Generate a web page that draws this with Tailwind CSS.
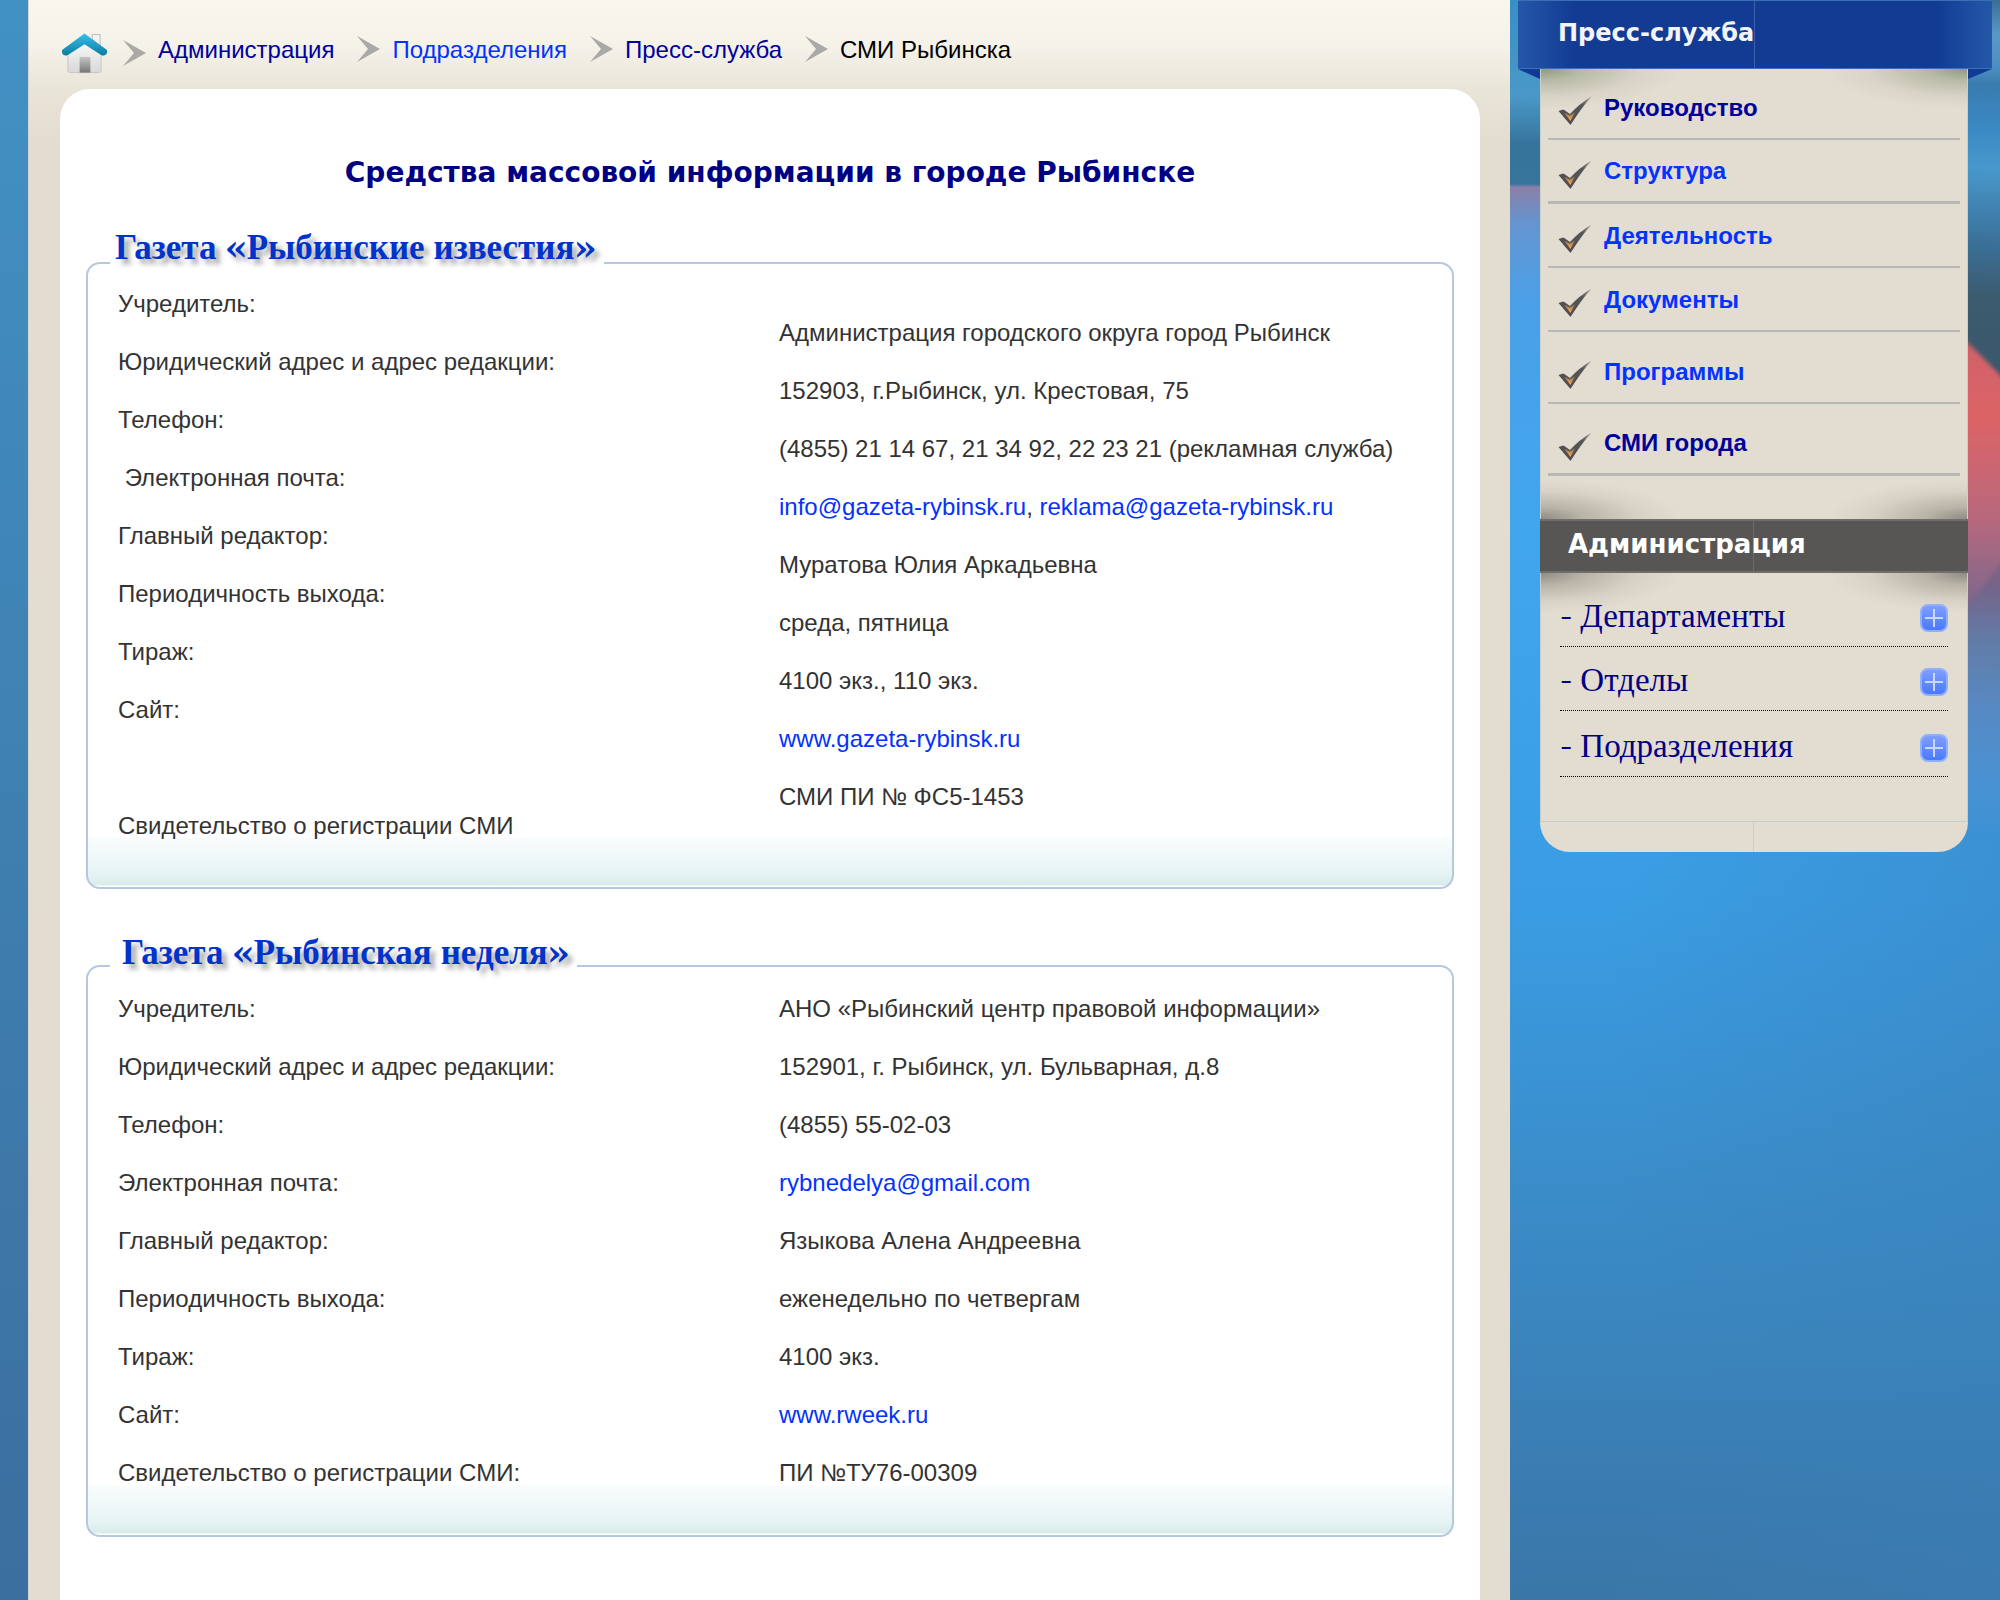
<!DOCTYPE html>
<html lang="ru">
<head>
<meta charset="utf-8">
<title>СМИ Рыбинска</title>
<meta name="viewport" content="width=device-width, initial-scale=1">
<script src="https://cdn.jsdelivr.net/npm/@tailwindcss/browser@4"></script>
</head>
<body class="min-h-screen flex bg-linear-to-b from-[#4291c4] to-[#3b6f9f] font-['Liberation_Sans',Arial,sans-serif] text-2xl leading-[29px] text-[#333]">

<svg class="absolute size-0" aria-hidden="true">
  <defs>
    <linearGradient id="roof" x1="0" y1="0" x2="0" y2="1"><stop offset="0" stop-color="#35c0ec"/><stop offset="1" stop-color="#0d7c9f"/></linearGradient>
    <linearGradient id="wall" x1="0" y1="0" x2="0" y2="1"><stop offset="0" stop-color="#fafafa"/><stop offset="1" stop-color="#d8d8d8"/></linearGradient>
    <linearGradient id="door" x1="0" y1="0" x2="0" y2="1"><stop offset="0" stop-color="#c4c4c4"/><stop offset="1" stop-color="#777"/></linearGradient>
    <linearGradient id="tick" x1="0" y1="0" x2="0" y2="1"><stop offset="0" stop-color="#a86a3c"/><stop offset="1" stop-color="#f0b060"/></linearGradient>
    <linearGradient id="steel" x1="0" y1="1" x2="1" y2="0"><stop offset="0" stop-color="#4a4b50"/><stop offset=".7" stop-color="#55565a"/><stop offset="1" stop-color="#a5a29c"/></linearGradient>
  </defs>
  <symbol id="arrow" viewBox="0 0 24 26"><path d="M1 0 L24 13 L1 26 L12 13 Z" fill="#a9a9a5"/></symbol>
  <symbol id="check" viewBox="0 0 34 30">
    <path d="M0.5 15 L5.500 13.500 L12 18 Q21 8 33.500 0.500 Q24 11 12.500 29 Z" fill="url(#steel)"/>
    <path d="M6 16.500 L12 19.500 L17 16 L12.500 25 Z" fill="url(#tick)"/>
  </symbol>
</svg>

<main class="flex-1 ml-7 pl-[31px] pr-[30px] flex flex-col border-l border-[#d8d6cc] bg-[#e3dcd0] bg-linear-[180deg,#f9f6ee_0px,#f5f2ea_45px,#e9e5d8_88px,#e3dcd0_145px]">
  <nav aria-label="Навигация" class="h-[89px] flex items-center pt-[9px] pl-0.5 text-[#00009c]">
    <a href="#" aria-label="Главная" class="mt-2">
      <svg class="block w-[45px] h-[41px]" viewBox="0 0 46 41">
        <path d="M31 1 h8 v14 l-8 -6z" fill="#f2f2f2" stroke="#bbb"/>
        <path d="M6 20 L23 8 L40 20 V38 Q40 40 38 40 H8 Q6 40 6 38 Z" fill="url(#wall)" stroke="#c6c6c6"/>
        <rect x="18" y="24" width="11" height="16" fill="url(#door)"/>
        <path d="M0 17 L23 0 L46 17 V20 Q44 24 40 22 L23 11 L6 22 Q2 24 0 20 Z" fill="url(#roof)"/>
      </svg>
    </a>
    <svg class="w-6 h-[26px] ml-[15px] mt-2"><use href="#arrow"/></svg>
    <a href="#" class="ml-3">Администрация</a>
    <svg class="w-6 h-[26px] ml-[22px]"><use href="#arrow"/></svg>
    <a href="#" class="ml-3 text-[#0432ff]">Подразделения</a>
    <svg class="w-6 h-[26px] ml-[22px]"><use href="#arrow"/></svg>
    <a href="#" class="ml-3">Пресс-служба</a>
    <svg class="w-6 h-[26px] ml-[22px]"><use href="#arrow"/></svg>
    <span class="ml-3 text-black">СМИ Рыбинска</span>
  </nav>

  <div class="flex-1 bg-white rounded-t-[30px] px-[26px]">
    <h1 class="pt-[67px] text-center font-['DejaVu_Sans',Verdana,sans-serif] font-bold text-[28px] leading-[34px] text-[#000084]">Средства массовой информации в городе Рыбинске</h1>

    <section class="mt-[72px] h-[627px] rounded-[14px] border-2 border-[#b5c8e1] bg-linear-[0deg,#fff_0px,#fff_1px,#d9eceb_2px,#e8f4f4_16px,#f8fcfd_48px,#fff_50px] pl-[30px] pr-3">
      <h2 class="-mt-[35px] -ml-2 w-fit bg-white pl-[5px] pr-2 font-[Georgia,Gelasio,'Liberation_Serif',serif] font-bold text-[35px] leading-10 text-[#0033cc] text-shadow-[5px_5px_5px_rgb(0_0_0/0.35)]">Газета «Рыбинские известия»</h2>
      <table class="mt-5 w-full table-fixed text-left">
        <tbody class="align-top">
          <tr><th class="font-normal">Учредитель:</th><td class="pt-[29px]">Администрация городского округа город Рыбинск</td></tr>
          <tr><th class="font-normal">Юридический адрес и адрес редакции:</th><td class="pt-[29px]">152903, г.Рыбинск, ул. Крестовая, 75</td></tr>
          <tr><th class="font-normal">Телефон:</th><td class="pt-[29px]">(4855) 21 14 67, 21 34 92, 22 23 21 (рекламная служба)</td></tr>
          <tr><th class="font-normal">&nbsp;Электронная почта:</th><td class="pt-[29px]"><a href="mailto:info@gazeta-rybinsk.ru" class="text-[#0432ff]">info@gazeta-rybinsk.ru</a>, <a href="mailto:reklama@gazeta-rybinsk.ru" class="text-[#0432ff]">reklama@gazeta-rybinsk.ru</a></td></tr>
          <tr><th class="font-normal">Главный редактор:</th><td class="pt-[29px]">Муратова Юлия Аркадьевна</td></tr>
          <tr><th class="font-normal">Периодичность выхода:</th><td class="pt-[29px]">среда, пятница</td></tr>
          <tr><th class="font-normal">Тираж:</th><td class="pt-[29px]">4100 экз., 110 экз.</td></tr>
          <tr><th class="font-normal">Сайт:</th><td class="pt-[29px]"><a href="#" class="text-[#0432ff]">www.gazeta-rybinsk.ru</a></td></tr>
          <tr><th class="font-normal pt-[58px]">Свидетельство о регистрации СМИ</th><td class="pt-[29px]">СМИ ПИ № ФС5-1453</td></tr>
        </tbody>
      </table>
    </section>

    <section class="mt-[76px] h-[572px] rounded-[14px] border-2 border-[#b5c8e1] bg-linear-[0deg,#fff_0px,#fff_1px,#d9eceb_2px,#e8f4f4_16px,#f8fcfd_48px,#fff_50px] pl-[30px] pr-3">
      <h2 class="-mt-[33px] -ml-2 w-fit bg-white pl-3 pr-2 font-[Georgia,Gelasio,'Liberation_Serif',serif] font-bold text-[35px] leading-10 text-[#0033cc] text-shadow-[5px_5px_5px_rgb(0_0_0/0.35)]">Газета «Рыбинская неделя»</h2>
      <table class="mt-5 w-full table-fixed text-left">
        <tbody class="align-top">
          <tr><th class="font-normal pb-[29px]">Учредитель:</th><td>АНО «Рыбинский центр правовой информации»</td></tr>
          <tr><th class="font-normal pb-[29px]">Юридический адрес и адрес редакции:</th><td>152901, г. Рыбинск, ул. Бульварная, д.8</td></tr>
          <tr><th class="font-normal pb-[29px]">Телефон:</th><td>(4855) 55-02-03</td></tr>
          <tr><th class="font-normal pb-[29px]">Электронная почта:</th><td><a href="mailto:rybnedelya@gmail.com" class="text-[#0432ff]">rybnedelya@gmail.com</a></td></tr>
          <tr><th class="font-normal pb-[29px]">Главный редактор:</th><td>Языкова Алена Андреевна</td></tr>
          <tr><th class="font-normal pb-[29px]">Периодичность выхода:</th><td>еженедельно по четвергам</td></tr>
          <tr><th class="font-normal pb-[29px]">Тираж:</th><td>4100 экз.</td></tr>
          <tr><th class="font-normal pb-[29px]">Сайт:</th><td><a href="#" class="text-[#0432ff]">www.rweek.ru</a></td></tr>
          <tr><th class="font-normal">Свидетельство о регистрации СМИ:</th><td>ПИ №ТУ76-00309</td></tr>
        </tbody>
      </table>
    </section>
  </div>
</main>

<aside class="relative w-[490px] shrink-0 overflow-hidden">
  <svg class="absolute inset-0 w-full h-full" viewBox="0 0 490 1600" preserveAspectRatio="none" aria-hidden="true">
    <defs>
      <linearGradient id="sea" x1="0" y1="0" x2="0" y2="1">
        <stop offset="0" stop-color="#388fc6"/><stop offset=".06" stop-color="#4a98c8"/><stop offset=".09" stop-color="#36749b"/><stop offset=".115" stop-color="#37759c"/><stop offset=".117" stop-color="#8a80a8"/><stop offset=".14" stop-color="#6495d0"/><stop offset=".19" stop-color="#4aa0e8"/><stop offset=".33" stop-color="#40a6ee"/><stop offset=".56" stop-color="#3a9de4"/><stop offset=".75" stop-color="#3a8cc8"/><stop offset="1" stop-color="#3a76a8"/>
      </linearGradient>
      <linearGradient id="far" gradientUnits="userSpaceOnUse" x1="470" y1="0" x2="450" y2="840">
        <stop offset="0" stop-color="#3a6f94"/><stop offset=".04" stop-color="#5a98c8"/><stop offset=".08" stop-color="#4d8ec2"/><stop offset=".1" stop-color="#3a7cae"/><stop offset=".15" stop-color="#3a88c2"/><stop offset=".2" stop-color="#4898cc"/><stop offset=".29" stop-color="#3a7098"/><stop offset=".35" stop-color="#3c5c70"/><stop offset=".45" stop-color="#3a566a"/><stop offset=".66" stop-color="#80607a"/><stop offset=".7" stop-color="#75658a"/><stop offset=".76" stop-color="#627ba6"/><stop offset=".84" stop-color="#5889c2"/><stop offset=".93" stop-color="#4a92d4"/><stop offset="1" stop-color="#3a92d3"/>
      </linearGradient>
      <linearGradient id="sheen" x1="0" y1="0" x2="1" y2="0"><stop offset="0" stop-color="#3a80b8" stop-opacity="0"/><stop offset="1" stop-color="#3a80b8" stop-opacity=".4"/></linearGradient>
      <filter id="edge"><feGaussianBlur stdDeviation="2"/></filter>
      <linearGradient id="blob" x1="0" y1="0" x2="0" y2="1"><stop offset="0" stop-color="#c8606a"/><stop offset=".4" stop-color="#dc6466"/><stop offset=".7" stop-color="#b8687c"/><stop offset="1" stop-color="#75688f"/></linearGradient>
    </defs>
    <rect width="490" height="1600" fill="url(#sea)"/>
    <rect x="250" width="240" height="840" fill="url(#far)"/>
    <rect x="100" y="840" width="390" height="760" fill="url(#sheen)"/>
    <path d="M400 290 L458 343 Q478 362 510 396 V535 Q480 580 450 615 H400 Z" fill="url(#blob)" filter="url(#edge)"/>
  </svg>

  <div class="relative mx-2">
    <div class="h-[69px] flex items-center pl-10 border-y border-[#3a6fb5] bg-[linear-gradient(90deg,transparent_calc(50%-1px),#ffffff30_calc(50%-1px),#ffffff30_50%,transparent_50%),linear-gradient(90deg,#2457a8,#123b94_12%,#123b94_88%,#2457a8)]">
      <h2 class="font-['DejaVu_Sans',Verdana,sans-serif] font-bold text-[24px] leading-8 text-[#f2f4f8] pb-1">Пресс-служба</h2>
    </div>
    <svg class="absolute left-0 top-[69px] w-[22px] h-[10px]" viewBox="0 0 22 10"><path d="M0 0H22V10Z" fill="#103a96"/></svg>
    <svg class="absolute right-0 top-[69px] w-[24px] h-[10px]" viewBox="0 0 24 10"><path d="M0 0H24L0 10Z" fill="#103a96"/></svg>
    <div class="ml-[22px] mr-[24px] rounded-b-[30px] bg-[#e3dcd0]">
      <div class="h-[450px] pt-[7px] px-[7px] border-x border-[#c8d0c8] bg-[radial-gradient(ellipse_140px_40px_at_0_0,#8e9a80,#8e9a8080_30%,#8e9a8020_70%,#8e9a8000),radial-gradient(ellipse_140px_40px_at_100%_0,#8e9a80,#8e9a8080_30%,#8e9a8020_70%,#8e9a8000),radial-gradient(ellipse_140px_40px_at_0_100%,#8f8b80,#8f8b8080_30%,#8f8b8020_70%,#8f8b8000),radial-gradient(ellipse_140px_40px_at_100%_100%,#8f8b80,#8f8b8080_30%,#8f8b8020_70%,#8f8b8000)]">
        <ul class="font-bold text-[#0432ff]">
          <li class="h-16 flex items-center gap-3 pl-2.5 border-b-2 border-[#b8b8b6]"><svg class="w-[34px] h-[30px] mt-2"><use href="#check"/></svg><a href="#" class="text-[#00009c]">Руководство</a></li>
          <li class="h-16 flex items-center gap-3 pl-2.5 border-b-3 border-[#b8b8b6]"><svg class="w-[34px] h-[30px] mt-2"><use href="#check"/></svg><a href="#">Структура</a></li>
          <li class="h-16 flex items-center gap-3 pl-2.5 border-b-2 border-[#b8b8b6]"><svg class="w-[34px] h-[30px] mt-2"><use href="#check"/></svg><a href="#">Деятельность</a></li>
          <li class="h-16 flex items-center gap-3 pl-2.5 border-b-2 border-[#b8b8b6]"><svg class="w-[34px] h-[30px] mt-2"><use href="#check"/></svg><a href="#">Документы</a></li>
          <li class="mt-2 h-16 flex items-center gap-3 pl-2.5 border-b-2 border-[#b8b8b6]"><svg class="w-[34px] h-[30px] mt-2"><use href="#check"/></svg><a href="#">Программы</a></li>
          <li class="mt-2 h-16 flex items-center gap-3 pl-2.5 border-b-3 border-[#b8b8b6]"><svg class="w-[34px] h-[30px] mt-2"><use href="#check"/></svg><a href="#" class="text-[#00009c]">СМИ города</a></li>
        </ul>
      </div>
      <div class="h-[54px] flex items-center pl-7 pb-1 border-y-2 border-[#6f6e6c] bg-[linear-gradient(90deg,transparent_calc(50%-1px),#ffffff20_calc(50%-1px),#ffffff20_50%,transparent_50%)] bg-[#575654]">
        <h2 class="font-['DejaVu_Sans',Verdana,sans-serif] font-bold text-[26px] leading-8 text-white">Администрация</h2>
      </div>
      <div class="h-[249px] pt-[10px] px-[19px] border-x border-b border-[#c4ceca] bg-[radial-gradient(ellipse_140px_40px_at_0_0,#8f8b80,#8f8b8080_30%,#8f8b8020_70%,#8f8b8000),radial-gradient(ellipse_140px_40px_at_100%_0,#8f8b80,#8f8b8080_30%,#8f8b8020_70%,#8f8b8000)]">
        <ul class="font-[Georgia,Gelasio,'Liberation_Serif',serif] text-[33px] text-[#000084]">
          <li class="h-16 pt-1.5 flex items-center justify-between border-b border-dotted border-black"><a href="#">- Департаменты</a><button type="button" aria-label="Развернуть" class="size-7 rounded-lg border-2 border-[#8fb0ff] bg-linear-to-b from-[#7f9dff] to-[#4a78ff] flex items-center justify-center"><svg class="size-[18px]" viewBox="0 0 18 18"><path d="M9 0V18M0 9H18" stroke="#c9d8ff" stroke-width="2"/></svg></button></li>
          <li class="h-16 pt-1.5 flex items-center justify-between border-b border-dotted border-black"><a href="#">- Отделы</a><button type="button" aria-label="Развернуть" class="size-7 rounded-lg border-2 border-[#8fb0ff] bg-linear-to-b from-[#7f9dff] to-[#4a78ff] flex items-center justify-center"><svg class="size-[18px]" viewBox="0 0 18 18"><path d="M9 0V18M0 9H18" stroke="#c9d8ff" stroke-width="2"/></svg></button></li>
          <li class="h-[66px] pt-2 flex items-center justify-between border-b border-dotted border-black"><a href="#">- Подразделения</a><button type="button" aria-label="Развернуть" class="size-7 rounded-lg border-2 border-[#8fb0ff] bg-linear-to-b from-[#7f9dff] to-[#4a78ff] flex items-center justify-center"><svg class="size-[18px]" viewBox="0 0 18 18"><path d="M9 0V18M0 9H18" stroke="#c9d8ff" stroke-width="2"/></svg></button></li>
        </ul>
      </div>
      <div class="h-[30px] grid grid-cols-2"><div class="border-r border-[#c4d0cf]"></div></div>
    </div>
  </div>
</aside>
</body>
</html>
